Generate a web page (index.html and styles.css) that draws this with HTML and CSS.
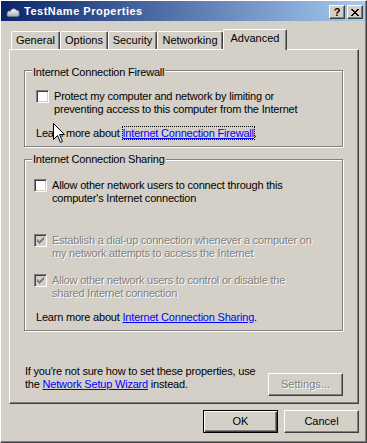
FILE: index.html
```html
<!DOCTYPE html>
<html lang="en">
<head>
  <meta charset="UTF-8" />
  <title>TestName Properties</title>
  <link rel="stylesheet" href="styles.css">
</head>
<body>

  <div class="window">
    <div class="titlebar">
      <svg class="app-icon" width="14" height="10" viewBox="0 0 14 10">
        <defs>
          <linearGradient id="cloud" x1="0" y1="0" x2="0" y2="1">
            <stop offset="0" stop-color="#ffffff" />
            <stop offset="1" stop-color="#a8a8a8" />
          </linearGradient>
        </defs>
        <path d="M3 9.5C1.2 9.5 0.3 8 1.3 6.6C1 4.8 2.9 3.6 4.6 4.2C5.2 1.6 8.8 1 10.3 3.2C12.2 3 13.5 4.4 13 6C13.9 7.6 12.9 9.5 11 9.5Z" fill="url(#cloud)" stroke="#7c7c7c" stroke-width="0.8" />
      </svg>
      <span class="title">TestName Properties</span>
      <div class="caption-buttons">
        <span class="cap-btn help">?</span>
        <span class="cap-btn close">
          <svg width="8" height="7" viewBox="0 0 8 7" shape-rendering="crispEdges">
            <path d="M0 0h2v1H0zM6 0h2v1H6zM1 1h2v1H1zM5 1h2v1H5zM2 2h4v1H2zM3 3h2v1H3zM2 4h4v1H2zM1 5h2v1H1zM5 5h2v1H5zM0 6h2v1H0zM6 6h2v1H6z" fill="#000" />
          </svg>
        </span>
      </div>
    </div>

    <div class="client">
      <div class="tabs">
        <span class="tab tab-general">General</span>
        <span class="tab tab-options">Options</span>
        <span class="tab tab-security">Security</span>
        <span class="tab tab-networking">Networking</span>
        <span class="tab tab-advanced selected">Advanced</span>
      </div>

      <div class="panel">
        <div class="group group-firewall">
          <div class="group-title">Internet Connection Firewall</div>
          <div class="check-row">
            <span class="checkbox"></span>
            <span class="check-label">Protect my computer and network by limiting or<br>preventing access to this computer from the Internet</span>
          </div>
          <p class="learn">Learn more about <a class="link focused" href="#">Internet Connection Firewall</a>.</p>
        </div>

        <div class="group group-sharing">
          <div class="group-title">Internet Connection Sharing</div>
          <div class="check-row row-allow">
            <span class="checkbox"></span>
            <span class="check-label">Allow other network users to connect through this<br>computer's Internet connection</span>
          </div>
          <div class="check-row row-dialup disabled">
            <span class="checkbox checked">
              <svg width="7" height="7" viewBox="0 0 7 7" shape-rendering="crispEdges">
                <path d="M0 2h1v3H0zM1 3h1v3H1zM2 4h1v3H2zM3 3h1v3H3zM4 2h1v3H4zM5 1h1v3H5zM6 0h1v3H6z" fill="#808080" />
              </svg>
            </span>
            <span class="check-label">Establish a dial-up connection whenever a computer on<br>my network attempts to access the Internet</span>
          </div>
          <div class="check-row row-control disabled">
            <span class="checkbox checked">
              <svg width="7" height="7" viewBox="0 0 7 7" shape-rendering="crispEdges">
                <path d="M0 2h1v3H0zM1 3h1v3H1zM2 4h1v3H2zM3 3h1v3H3zM4 2h1v3H4zM5 1h1v3H5zM6 0h1v3H6z" fill="#808080" />
              </svg>
            </span>
            <span class="check-label">Allow other network users to control or disable the<br>shared Internet connection</span>
          </div>
          <p class="learn">Learn more about <a class="link" href="#">Internet Connection Sharing</a>.</p>
        </div>

        <div class="setup">
          <p class="setup-text">If you're not sure how to set these properties, use<br>the <a class="link" href="#">Network Setup Wizard</a> instead.</p>
          <button class="btn settings" disabled>Settings...</button>
        </div>
      </div>

      <div class="dialog-buttons">
        <button class="btn default">OK</button>
        <button class="btn">Cancel</button>
      </div>
    </div>

    <svg class="cursor" width="12" height="20" viewBox="0 0 12 20">
      <path d="M0.5 0.5V16.5L4.5 12.5L7.5 19.5L9.5 18.5L6.5 11.5H11.5Z" fill="#fff" stroke="#000" stroke-width="1" stroke-linejoin="miter" />
    </svg>
  </div>

</body>
</html>
```

FILE: styles.css
```css
body {
  margin: 0;
  background-color: #d4d0c8;
}

.window {
  position: relative;
  box-sizing: border-box;
  width: 367px;
  height: 443px;
  background-color: #d4d0c8;
  border: 1px solid;
  border-color: #fff #404040 #404040 #fff;
  box-shadow: inset -1px -1px 0 #808080;
  font-family: Tahoma, 'Liberation Sans', sans-serif;
  font-size: 11px;
  line-height: 13px;
  letter-spacing: -0.2px;
  color: #000;
}

/* title bar */

.titlebar {
  display: flex;
  align-items: center;
  height: 20px;
  margin-right: 1px;
  background: linear-gradient(to right, #0a246a, #a6caf0);
  color: white;
  font-weight: bold;
}

.app-icon {
  margin-left: 5px;
  margin-top: 2px;
}

.title {
  margin-left: 4px;
  margin-top: 1px;
  letter-spacing: 0.5px;
}

.caption-buttons {
  display: flex;
  gap: 2px;
  margin-left: auto;
  margin-right: 2px;
  align-self: flex-start;
  margin-top: 4px;
}

.cap-btn {
  box-sizing: border-box;
  display: flex;
  align-items: center;
  justify-content: center;
  width: 16px;
  height: 14px;
  background-color: #d4d0c8;
  border: 1px solid;
  border-color: #fff #404040 #404040 #fff;
  box-shadow: inset -1px -1px 0 #808080;
  color: black;
  font-size: 11px;
  font-weight: bold;
  line-height: 1;
  letter-spacing: 0;
}

.cap-btn.close svg {
  display: block;
  margin: 0 1px 0 0;
}

/* tabs */

.client {
  padding: 8px 7px 0 8px;
}

.tabs {
  display: flex;
  align-items: flex-end;
  margin-left: 2px;
}

.tab {
  box-sizing: border-box;
  height: 18px;
  padding-top: 2px;
  text-align: center;
  border-top: 1px solid #fff;
  border-left: 1px solid #fff;
  border-right: 1px solid #404040;
  border-radius: 2px 2px 0 0;
  box-shadow: inset -1px 0 0 #808080;
  white-space: nowrap;
  letter-spacing: 0;
}

.tab-general { width: 49px; }
.tab-options { width: 48px; }
.tab-security { width: 49px; }
.tab-networking { width: 66px; }
.tab-advanced { width: 64px; }

.tab.selected {
  position: relative;
  z-index: 1;
  height: 21px;
  margin-bottom: -1px;
  padding-top: 2px;
  background-color: #d4d0c8;
}

.panel {
  box-sizing: border-box;
  height: 355px;
  padding: 20px 0 0 14px;
  border: 1px solid;
  border-color: #fff #404040 #404040 #fff;
  box-shadow: inset -1px -1px 0 #808080;
}

/* group boxes */

.group {
  box-sizing: border-box;
  width: 319px;
  padding: 0 0 6px 9px;
  border: 1px solid #808080;
  box-shadow: inset 1px 1px 0 #fff, 1px 1px 0 #fff;
}

.group-title {
  display: table;
  margin: -5px 0 0 -2px;
  padding: 0 1px;
  background-color: #d4d0c8;
}

.group-sharing {
  margin-top: 12px;
}

.group-sharing .group-title {
  margin-top: -7px;
}

.check-row {
  display: flex;
  gap: 5px;
  margin-top: 11px;
}

.group-firewall .check-row {
  margin-left: 2px;
}

.row-allow { margin-top: 13px; }
.row-dialup { margin-top: 29px; }
.row-control { margin-top: 14px; }

.checkbox {
  flex: none;
  box-sizing: border-box;
  width: 13px;
  height: 13px;
  padding: 2px;
  background-color: white;
  border: 1px solid;
  border-color: #808080 #fff #fff #808080;
  box-shadow: inset 1px 1px 0 #404040, inset -1px -1px 0 #d4d0c8;
}

.checkbox svg {
  display: block;
}

.disabled .checkbox {
  background-color: #d4d0c8;
}

.check-label {
  white-space: nowrap;
}

.disabled .check-label {
  color: #808080;
  text-shadow: 1px 1px 0 #fff;
}

.learn {
  margin: 11px 0 0 2px;
  white-space: nowrap;
}

.link {
  color: #0000ff;
  text-decoration: underline;
}

.link.focused {
  outline: 1px dotted #000;
}

/* bottom part */

.setup {
  display: flex;
  justify-content: space-between;
  align-items: flex-start;
  width: 319px;
  margin-top: 34px;
}

.setup-text {
  margin: 0 0 0 1px;
  white-space: nowrap;
}

.btn {
  box-sizing: border-box;
  width: 75px;
  height: 23px;
  padding: 0;
  font: inherit;
  color: black;
  background-color: #d4d0c8;
  border: 1px solid;
  border-color: #fff #404040 #404040 #fff;
  border-radius: 0;
  box-shadow: inset -1px -1px 0 #808080;
}

.btn.settings {
  margin-top: 8px;
}

.btn:disabled {
  color: #808080;
  text-shadow: 1px 1px 0 #fff;
}

.btn.default {
  border-color: #000;
  box-shadow: inset 1px 1px 0 #fff, inset -1px -1px 0 #404040, inset -2px -2px 0 #808080;
}

.dialog-buttons {
  display: flex;
  justify-content: flex-end;
  gap: 6px;
  margin-top: 6px;
}

.cursor {
  position: absolute;
  left: 52px;
  top: 122px;
}
```
